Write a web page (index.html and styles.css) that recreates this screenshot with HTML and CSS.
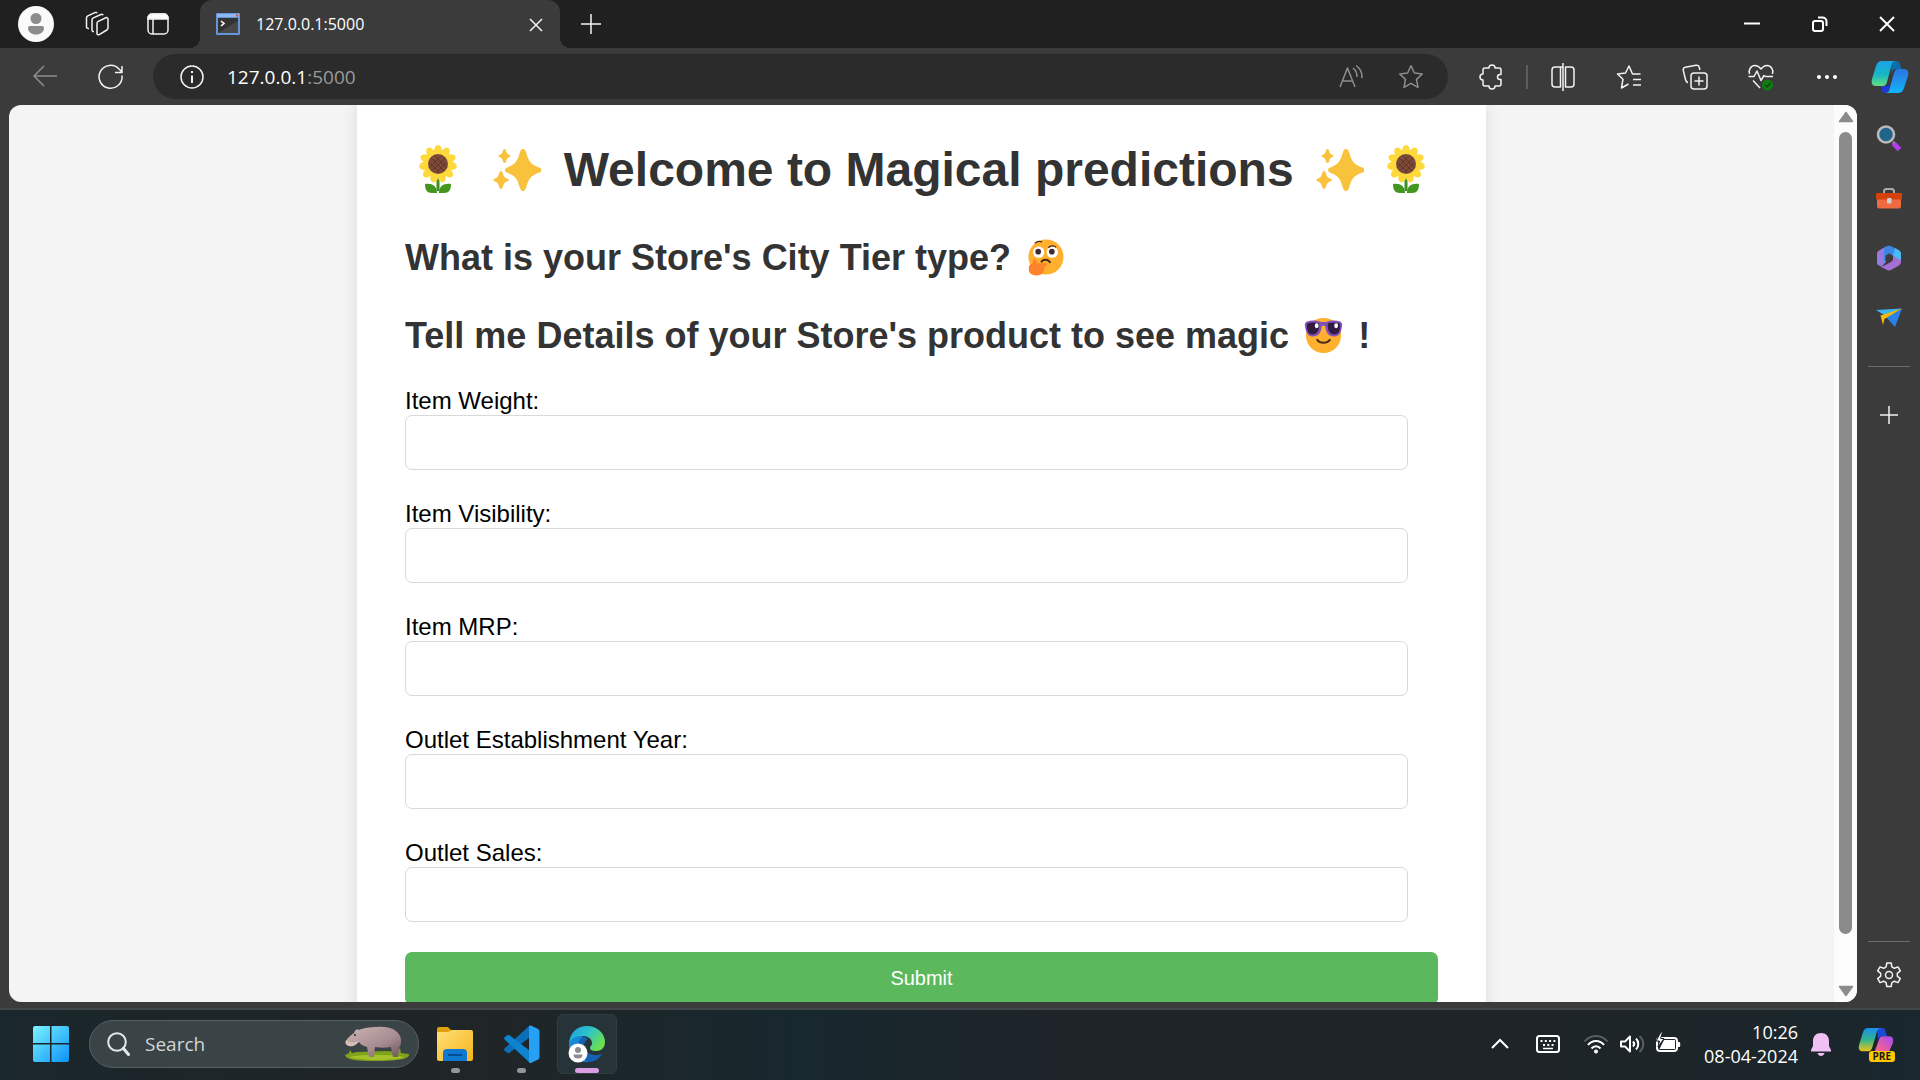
FILE: index.html
```html
<!DOCTYPE html>
<html lang="en">
<head>
<meta charset="utf-8">
<meta name="viewport" content="width=device-width, initial-scale=1">
<title>127.0.0.1:5000</title>
<link rel="stylesheet" href="styles.css">
</head>
<body>
<svg class="defs" width="0" height="0" aria-hidden="true">
  <defs>
    <linearGradient id="cp-a" x1="0" y1="0" x2="0" y2="1"><stop offset="0" stop-color="#1aa2e8"/><stop offset=".55" stop-color="#18b7c4"/><stop offset="1" stop-color="#63df82"/></linearGradient>
    <linearGradient id="cp-b" x1="0" y1="0" x2="0" y2="1"><stop offset="0" stop-color="#2c74e0"/><stop offset="1" stop-color="#12b4fa"/></linearGradient>
    <linearGradient id="pr-a" x1="0" y1="0" x2="0" y2="1"><stop offset="0" stop-color="#1d8cf0"/><stop offset=".5" stop-color="#2fb48c"/><stop offset="1" stop-color="#f2c418"/></linearGradient>
    <linearGradient id="pr-b" x1="1" y1="0" x2="0" y2="1"><stop offset="0" stop-color="#a04cf0"/><stop offset=".6" stop-color="#f0609c"/><stop offset="1" stop-color="#f58a5a"/></linearGradient>
    <linearGradient id="win" x1="0" y1="0" x2="1" y2="1"><stop offset="0" stop-color="#7bf3ff"/><stop offset="1" stop-color="#0a93f8"/></linearGradient>
    <linearGradient id="folder" x1="0" y1="0" x2="1" y2="1"><stop offset="0" stop-color="#ffdf7a"/><stop offset="1" stop-color="#f6b31a"/></linearGradient>
    <linearGradient id="edge-a" x1="0" y1="0" x2="1" y2=".5"><stop offset="0" stop-color="#1b9de2"/><stop offset=".55" stop-color="#2fc4c8"/><stop offset="1" stop-color="#6be052"/></linearGradient>
    <linearGradient id="hippo" x1="0" y1="0" x2="1" y2="1"><stop offset="0" stop-color="#cdb6b4"/><stop offset=".6" stop-color="#a78c91"/><stop offset="1" stop-color="#6d555e"/></linearGradient>
    <symbol id="sunflower" viewBox="0 0 48 48">
      <path d="M24 33v13" stroke="#3c911c" stroke-width="3"/>
      <path d="M11 39c7-1 12 2 12 9h-5c-5 0-7-3-7-9zM37 39c-7-1-12 2-12 9h5c5 0 7-3 7-9z" fill="#43961e"/>
      <g fill="#ffd83b">
        <ellipse cx="24" cy="6" rx="4" ry="6"/>
        <ellipse cx="24" cy="6" rx="4" ry="6" transform="rotate(33 24 19)"/>
        <ellipse cx="24" cy="6" rx="4" ry="6" transform="rotate(66 24 19)"/>
        <ellipse cx="24" cy="6" rx="4" ry="6" transform="rotate(98 24 19)"/>
        <ellipse cx="24" cy="6" rx="4" ry="6" transform="rotate(131 24 19)"/>
        <ellipse cx="24" cy="6" rx="4" ry="6" transform="rotate(164 24 19)"/>
        <ellipse cx="24" cy="6" rx="4" ry="6" transform="rotate(196 24 19)"/>
        <ellipse cx="24" cy="6" rx="4" ry="6" transform="rotate(229 24 19)"/>
        <ellipse cx="24" cy="6" rx="4" ry="6" transform="rotate(262 24 19)"/>
        <ellipse cx="24" cy="6" rx="4" ry="6" transform="rotate(294 24 19)"/>
        <ellipse cx="24" cy="6" rx="4" ry="6" transform="rotate(327 24 19)"/>
        <circle cx="24" cy="19" r="12"/>
      </g>
      <circle cx="24" cy="19" r="10" fill="#7b4a38"/>
      <path d="M17 13l13 13M20 10l13 13M15 17l11 11M31 13L18 26M28 10L15 23M33 17L22 28" stroke="#653627" stroke-width="1"/>
    </symbol>
    <symbol id="sparkles" viewBox="0 0 48 48">
      <g fill="#f9c23c">
        <path d="M30 4c2 0 2.700 2 3.500 4.500C36 17 38 19 45 22c2.500 1 4 1.500 4 3s-1.500 2.200-4 3c-7 3-9 5-11.500 13.500C32.700 44 32 46 30 46s-2.700-2-3.500-4.500C24 33 22 31 15.500 28.200 13 27 12 26.500 12 25s1-2 3.500-3C22 19 24 17 26.500 8.500 27.300 6 28 4 30 4z"/>
        <path d="M11.500 4c1 0 1.300 1 1.600 2 .8 2.500 1.200 3 3 3.700.8.300 1.400.6 1.400 1.300s-.6 1-1.400 1.300c-1.800.7-2.200 1.200-3 3.700-.3 1-.6 2-1.600 2s-1.300-1-1.600-2c-.8-2.500-1.200-3-3-3.700C6.100 12 5.500 11.700 5.500 11s.6-1 1.400-1.300c1.800-.7 2.200-1.200 3-3.700.3-1 .6-2 1.600-2z"/>
        <path d="M8 26c1.200 0 1.500 1.200 2 2.700 1 3 1.500 3.800 4 4.800 1 .4 1.700.7 1.700 1.500s-.7 1.100-1.700 1.500c-2.500 1-3 1.800-4 4.800C9.500 42.800 9.200 44 8 44s-1.500-1.200-2-2.700c-1-3-1.500-3.800-4-4.800C1 36.100.5 35.800.5 35S1 33.900 2 33.500c2.500-1 3-1.800 4-4.800C6.500 27.200 6.800 26 8 26z"/>
      </g>
    </symbol>
  </defs>
</svg>

<header class="tabbar">
  <button class="tb-btn" aria-label="Profile"><svg width="36" height="36" viewBox="0 0 36 36"><circle cx="18" cy="18" r="18" fill="#fafafa"/><circle cx="18" cy="12.500" r="5.500" fill="#8c8c8c"/><path d="M10 22c0-1.300.8-2 2-2h12c1.200 0 2 .7 2 2 0 4-3.500 6.500-8 6.500S10 26 10 22z" fill="#8c8c8c"/></svg></button>
  <button class="tb-btn" aria-label="Workspaces"><svg class="line" width="26" height="26" viewBox="0 0 26 26"><path d="M13 12.500c0-1 .5-1.700 1.300-2.100l7.500-3.600c1.200-.5 2.200.1 2.200 1.300v9c0 .8-.4 1.500-1.200 1.900l-7.600 4.600c-1.200.6-2.200 0-2.200-1.200z"/><path d="M10 20.500c-1 .3-2-.3-2-1.500V9c0-1 .5-1.700 1.300-2.100L17 3.500c.9-.4 1.900-.2 2.200.8"/><path d="M5 17.500c-1.200.2-2.500-.4-2.500-1.600V7c0-1 .5-1.700 1.300-2.100l7-3.300c1-.4 2-.2 2.300.6"/></svg></button>
  <button class="tb-btn" aria-label="Tab actions"><svg class="line" width="24" height="24" viewBox="0 0 24 24"><rect x="2" y="2" width="20" height="20" rx="4"/><path d="M2 7V6a4 4 0 0 1 4-4h12a4 4 0 0 1 4 4v1z" fill="#fff"/><path d="M7 7v15"/></svg></button>
  <div class="tab">
    <svg width="24" height="22" viewBox="0 0 24 22"><rect width="24" height="22" rx="1" fill="#6595d6"/><rect x="1" y="1" width="22" height="3" fill="#8db7ef"/><circle cx="21" cy="2.500" r="1.200" fill="#e8503a"/><rect x="2" y="5" width="20" height="15" fill="#333"/><path d="M2 20L22 8v12z" fill="#484848"/><path d="M5 8l3 2.500L5 13" fill="none" stroke="#fff" stroke-width="1.600"/></svg>
    <span class="tab-title">127.0.0.1:5000</span>
    <button class="tab-close" aria-label="Close tab"><svg class="line" width="24" height="24" viewBox="0 0 24 24"><path d="M6 7l12 12M18 7L6 19"/></svg></button>
  </div>
  <button class="tb-btn" aria-label="New tab"><svg class="line" width="24" height="24" viewBox="0 0 24 24"><path d="M12 2v20M2 12h20"/></svg></button>
  <div class="window-controls">
    <button aria-label="Minimize"><svg width="24" height="24" viewBox="0 0 24 24"><path d="M4 11.500h16" stroke="#fff" stroke-width="2"/></svg></button>
    <button aria-label="Restore"><svg class="bold" width="24" height="24" viewBox="0 0 24 24"><rect x="5" y="9" width="10" height="10" rx="2"/><path d="M10 5.500h4.500a4 4 0 0 1 4 4V14"/></svg></button>
    <button aria-label="Close"><svg class="bold" width="24" height="24" viewBox="0 0 24 24"><path d="M5 5l14 14M19 5L5 19"/></svg></button>
  </div>
</header>

<nav class="toolbar">
  <button class="nav-btn" aria-label="Back"><svg class="line dim" width="28" height="28" viewBox="0 0 28 28"><path d="M26 13H3M13 3L3 13l10 10"/></svg></button>
  <button class="nav-btn" aria-label="Refresh"><svg class="line" width="28" height="28" viewBox="0 0 28 28"><path d="M25 12.500A11.500 11.500 0 1 1 22 6l3 3M25 3v6.500h-7"/></svg></button>
  <div class="address">
    <svg class="line" width="24" height="24" viewBox="0 0 24 24"><circle cx="12" cy="12" r="11"/><path d="M12 10.500V18M12 6v2" stroke-width="2"/></svg>
    <span class="url">127.0.0.1<span class="port">:5000</span></span>
    <button aria-label="Read aloud"><svg class="line dim" width="26" height="26" viewBox="0 0 26 26"><path d="M2 23L9.500 4 17 23M5 17h9"/><path d="M15 4a11 11 0 0 1 4 9M18 1.500A14 14 0 0 1 24 14"/></svg></button>
    <button aria-label="Favorite"><svg class="line dim" width="26" height="26" viewBox="0 0 26 26"><path d="M13 1.800l3.400 7.200 7.900 1-5.800 5.400 1.500 7.900-7-3.900-7 3.900 1.500-7.900L1.700 10l7.900-1z"/></svg></button>
  </div>
  <button class="nav-btn" aria-label="Extensions"><svg class="line" width="26" height="28" viewBox="0 0 26 28"><path d="M7 5h4a3 3 0 1 1 6 0h4a2 2 0 0 1 2 2v4.500h-1a2.500 2.500 0 0 0 0 5h1V21a2 2 0 0 1-2 2h-4a3 3 0 1 1-6 0H7a2 2 0 0 1-2-2v-4a3 3 0 1 1 0-6V7a2 2 0 0 1 2-2z"/></svg></button>
  <span class="divider"></span>
  <button class="nav-btn" aria-label="Split screen"><svg class="line" width="26" height="28" viewBox="0 0 26 28"><path d="M13 0v28M13 4H5a3 3 0 0 0-3 3v14a3 3 0 0 0 3 3h5.500V4M15.500 4H21a3 3 0 0 1 3 3v14a3 3 0 0 1-3 3h-5.500z"/></svg></button>
  <button class="nav-btn" aria-label="Favorites"><svg class="line" width="26" height="26" viewBox="0 0 26 26"><path d="M24.500 10h-8L13 2 9.500 9 1.500 10l5.500 5.200L5.500 24l7-4M17 15.500h8M17 21h8"/></svg></button>
  <button class="nav-btn" aria-label="Collections"><svg class="line" width="26" height="26" viewBox="0 0 26 26"><rect x="9" y="9" width="16" height="16" rx="3"/><path d="M17 12.500v9M12.500 17h9M6 18.500C4.500 18.500 4 17 3.500 15.500L1.300 6.500C1 4.800 1.800 3.500 3.300 3.200L14 1.200c1.700-.3 3 .6 3.300 2.300l.5 2.500"/></svg></button>
  <button class="nav-btn" aria-label="Browser essentials"><svg class="line" width="28" height="28" viewBox="0 0 28 28"><path d="M2.500 11C1 7 4 2.500 8 2.500c3 0 4.500 1.500 6 3.500 1.500-2 3-3.500 6-3.500 4 0 7 4.500 5.500 8.500M1.500 13.500H7l3-5.500 4 9.500 3-5 1.500 1H26M6 17.500l7 7.500"/><circle cx="20.500" cy="22" r="5.500" fill="#0f7b10" stroke="none"/><path d="M18 22l2 2 3.500-4" stroke="#0a4d0a"/></svg></button>
  <button class="nav-btn" aria-label="Settings and more"><svg width="26" height="26" viewBox="0 0 26 26" fill="#fff"><circle cx="5" cy="13" r="2"/><circle cx="13" cy="13" r="2"/><circle cx="21" cy="13" r="2"/></svg></button>
  <button class="copilot" aria-label="Copilot"><svg width="38" height="36" viewBox="0 0 38 36"><path d="M20 2h5c2.500 0 3.500 1 4 3l1.500 5h-5c-3 0-4 1.500-5 4z" fill="#0c6fa8"/><path d="M17 34h-3c-2 0-2.600-1-3-3l-1-4H15c2 0 3-1.500 4-4z" fill="#2138d8"/><path d="M11 2h14c-3 0-4 1.500-4.500 4L16 23c-.8 2.500-2 4-4 4H5c-4 0-5-3-4-7L5 7c1-3.500 3-5 6-5z" fill="url(#cp-a)"/><path d="M27 34H14c3 0 4-1.500 4.500-4L23 14c.8-2.500 2-4 4-4h6c4 0 5 3 4 7l-4 12c-1 3.500-3 5-6 5z" fill="url(#cp-b)"/></svg></button>
</nav>

<div class="workspace">
  <div class="viewport">
    <div class="page">
      <main class="card">
        <h1><svg class="emoji-lg" role="img" aria-label="Sunflower"><use href="#sunflower"/></svg> <svg class="emoji-lg" role="img" aria-label="Sparkles"><use href="#sparkles"/></svg> Welcome to Magical predictions <svg class="emoji-lg" role="img" aria-label="Sparkles"><use href="#sparkles"/></svg><svg class="emoji-lg" role="img" aria-label="Sunflower"><use href="#sunflower"/></svg></h1>
        <h2>What is your Store's City Tier type? <svg class="emoji" viewBox="0 0 38 38" role="img" aria-label="Thinking face"><circle cx="19.500" cy="18.500" r="18" fill="#ffb02e"/><circle cx="12" cy="13.500" r="5.800" fill="#fff"/><circle cx="26" cy="13.500" r="5.800" fill="#fff"/><circle cx="11.500" cy="13" r="2.900" fill="#3f2a33"/><circle cx="25.500" cy="13" r="2.900" fill="#3f2a33"/><path d="M8 4.500c2-2 5-2.500 7.500-1.500M22 9c2-2.500 6-2.500 8-.5" fill="none" stroke="#4a2a1c" stroke-width="1.300"/><path d="M14.500 24c2-4 7.500-3.500 9.500.5" fill="none" stroke="#4a2a1c" stroke-width="2"/><path d="M7 21c2-.5 3 1 3.300 4l9.200 0c1.500.3 1.700 2.500 0 3l-2 .5c1 4-1.500 9-7.500 9-7 0-9-4-8-9 .7-4 4-2 4-5 0-1.500 0-2.300 1-2.500z" fill="#ff822d"/></svg></h2>
        <h2>Tell me Details of your Store's product to see magic <svg class="emoji" viewBox="0 0 38 38" role="img" aria-label="Smiling face with sunglasses"><circle cx="19" cy="19" r="18" fill="#ffb02e"/><path d="M2 4.500c4-1.500 10-1 13 0 2.500.8 5.500.8 8 0 3-1 9-1.500 13 0 2 1 2.500 3 2 5-1 7-3 10.500-8 10.500-6 0-8.500-4-9-9.500-.5-2-3.500-2-4 0C16.500 16 14 20 8 20 3 20 1 16.500 0 9.500-.5 7.500 0 5.500 2 4.500z" fill="#8250b8"/><path d="M3 6.500c4-1.500 8-1 11.500 0 .8 6-1.500 11.500-6.500 11.500-4.500 0-6-3.500-6-9 0-1 0-2 1-2.500zM35 6.500c-4-1.500-8-1-11.500 0C22.700 12.500 25 18 30 18c4.500 0 6-3.500 6-9 0-1 0-2-1-2.500z" fill="#321b41"/><ellipse cx="12" cy="9" rx="2" ry="2.500" fill="#fff"/><ellipse cx="32" cy="9" rx="2" ry="2.500" fill="#fff"/><path d="M12.500 23.500c3 4 10 4 13 0" fill="none" stroke="#4a2a1c" stroke-width="2" stroke-linecap="round"/></svg> !</h2>
        <form>
          <label for="weight">Item Weight:</label>
          <input id="weight" type="text">
          <label for="visibility">Item Visibility:</label>
          <input id="visibility" type="text">
          <label for="mrp">Item MRP:</label>
          <input id="mrp" type="text">
          <label for="year">Outlet Establishment Year:</label>
          <input id="year" type="text">
          <label for="sales">Outlet Sales:</label>
          <input id="sales" type="text">
          <button class="submit" type="button">Submit</button>
        </form>
      </main>
    </div>
    <div class="scrollbar">
      <svg width="16" height="12" viewBox="0 0 16 12"><path d="M8 1.500L14.500 10.500h-13z" fill="#8b8b8b" stroke="#8b8b8b" stroke-width="1.500" stroke-linejoin="round"/></svg>
      <span class="track"><span class="thumb"></span></span>
      <svg width="16" height="12" viewBox="0 0 16 12"><path d="M8 10.500L14.500 1.500h-13z" fill="#8b8b8b" stroke="#8b8b8b" stroke-width="1.500" stroke-linejoin="round"/></svg>
    </div>
  </div>
  <aside class="sidebar">
    <button aria-label="Search"><svg width="28" height="28" viewBox="0 0 28 28"><path d="M18 18l3 3" stroke="#999" stroke-width="3"/><path d="M18.500 19.500l6 6" stroke="#b43cf0" stroke-width="5"/><circle cx="11" cy="10.500" r="8" fill="#1f658c" stroke="#b9b9b9" stroke-width="2.600"/></svg></button>
    <button aria-label="Shopping tools"><svg width="28" height="24" viewBox="0 0 28 24"><path d="M9 8V5.500C9 4 9.800 3 11.300 3h5.400C18.200 3 19 4 19 5.500V8" fill="none" stroke="#aaa" stroke-width="2"/><path d="M2 12h24v8a2.500 2.500 0 0 1-2.500 2.500h-19A2.500 2.500 0 0 1 2 20z" fill="#ee6a40"/><rect x="1" y="7" width="26" height="6.500" rx="1" fill="#d4410d"/><rect x="12" y="12" width="4.500" height="5.500" rx="1.200" fill="#d0d0d0"/></svg></button>
    <button aria-label="Microsoft 365"><svg width="28" height="28" viewBox="0 0 28 28"><path d="M11 2.500L4 6.500C2.500 7.500 2 8.500 2 10v8.500c0 1.500.6 2.500 2 3l3 .5 4-4V8z" fill="#9a7ae0"/><path d="M11 2.500c1.500-1 4-1 5.500-.2l7 4c1.600 1 2.500 2.400 2.500 4V17l-8-5-4-2.500-3 2V17l-2 1C8.500 14 9 8 9 6c0-1.500.7-2.700 2-3.500z" fill="#3c86e6"/><path d="M18 12l8 5v-7c0-1.600-.8-3-2.500-4L20 4z" fill="#48bdf5"/><path d="M26 16v2c0 1.500-.8 2.800-2 3.500l-7.500 4.300c-1.500.8-3.500.8-5 0L4 21.800c2.500 1 5 .2 7-1l5-3c1.700-1 2-2 2-3.500V12z" fill="#a46fd2"/><path d="M14 9.500l4 2.500v4l-4 2.500L10.500 17v-5z" fill="#3b3b3b"/></svg></button>
    <button aria-label="Drop"><svg width="28" height="24" viewBox="0 0 28 24"><path d="M1 4l26-1.500L9 9z" fill="#42b6f0"/><path d="M27 2.500L20 21 11 11z" fill="#2a82e8"/><path d="M27 2.500L9.500 13 8 19 5.500 9.500z" fill="#f6b90c"/></svg></button>
    <span class="rule"></span>
    <button class="add" aria-label="Customize"><svg class="line" width="24" height="24" viewBox="0 0 24 24"><path d="M12 3v18M3 12h18"/></svg></button>
    <span class="rule push"></span>
    <button class="gear" aria-label="Settings"><svg class="line" width="28" height="28" viewBox="0 0 28 28"><circle cx="14" cy="14" r="3.500"/><path d="M11.800 2h4.400l.7 3.900 2.400 1.400 3.700-1.400 2.300 3.900-3 2.500v2.900l3 2.500-2.300 3.900-3.700-1.400-2.400 1.400-.7 3.900h-4.400l-.7-3.900-2.400-1.400L5 21.600l-2.300-3.900 3-2.500v-2.900l-3-2.500L5 5.900l3.700 1.400 2.400-1.400z"/></svg></button>
  </aside>
</div>

<footer class="taskbar">
  <button class="tile" aria-label="Start"><svg width="36" height="36" viewBox="0 0 36 36"><path d="M2 0h15v17H0V2a2 2 0 0 1 2-2zM18.500 0H34a2 2 0 0 1 2 2v15H18.500zM0 18.500h17V36H2a2 2 0 0 1-2-2zM18.500 18.500H36V34a2 2 0 0 1-2 2H18.500z" fill="url(#win)"/></svg></button>
  <div class="search">
    <svg width="26" height="26" viewBox="0 0 26 26" fill="none" stroke="#e6e9ea"><circle cx="11" cy="11" r="8.800" stroke-width="2"/><path d="M17.500 17.500l5 6" stroke-width="3" stroke-linecap="round"/></svg>
    <input type="text" placeholder="Search" aria-label="Search">
    <svg width="66" height="36" viewBox="0 0 66 36"><path d="M1 29l4-2 1-3 2 3 5-1 30-1 10 1 3-4 1 5 8 1c1 5-11 7-33 7C13 35 2 34 1 29z" fill="#7ea31a"/><path d="M5 31c15-3 40-3 55 0-8 4-45 4-55 0z" fill="#a5c22a"/><path d="M28 22l1 8h-4l-1-8zM52 18l1 12h-4l-2-10z" fill="#75606a"/><path d="M10 7c1-3 3-5 5-3 4-2 11-3 18-3 13-1 20 3 23 9 2 5 1 9-1 12l-1 9h-5l-2-10c-5 1-11 1-16 0l-1 10h-5l-2-10c-4-1-7-3-8-5-3 1-6 5-10 4-5-1-4-5-1-8 2-2 4-4 6-5z" fill="url(#hippo)"/><path d="M2 14c3 3 9 3 13 1-2 4-6 6-10 5-3-1-4-3-3-6z" fill="#d9beb8"/><circle cx="11" cy="9" r="1" fill="#33252c"/></svg>
  </div>
  <button class="tile running" aria-label="File Explorer"><svg width="36" height="34" viewBox="0 0 36 34"><path d="M0 2a2 2 0 0 1 2-2h9l3 3h18v8H0z" fill="#e0a008"/><path d="M0 5h11l4-2h19a2 2 0 0 1 2 2v27a2 2 0 0 1-2 2H2a2 2 0 0 1-2-2z" fill="url(#folder)"/><path d="M6 34V26a4 4 0 0 1 4-4h16a4 4 0 0 1 4 4v8z" fill="#0f78d0"/><path d="M11 28h14" stroke="#0a4c94" stroke-width="2"/></svg></button>
  <button class="tile running" aria-label="Visual Studio Code"><svg width="38" height="38" viewBox="0 0 38 38"><path d="M27 1L3 23c-1 1-1.500 2 0 3l2 1.600c1 .8 2 .6 3-.2L28 12z" fill="#0b6fb8"/><path d="M27 37L3 15c-1-1-1.500-2 0-3l2-1.600c1-.8 2-.6 3 .2L28 26z" fill="#0e84d0"/><path d="M27 1c.8-.7 1.500-.8 2.500-.3l6 3c1.500.8 2 1.500 2 3v25c0 1.400-.5 2.200-2 3l-6 3c-1 .4-1.700.3-2.500-.3V1z" fill="#26a0f4"/></svg></button>
  <button class="tile running active" aria-label="Microsoft Edge"><svg width="38" height="38" viewBox="0 0 38 38"><path d="M1 20c1 9 9 17 19 17 6 0 11-3 14-8-8 3-17 0-18-8 0-4 2-6 4-7C10 8 1 12 1 20z" fill="#1562b4"/><path d="M1 20C1 8 9 1 19 1s18 7 18 16c0 6-4 9-9 9-4 0-6-1-6-3s2-2 2-5c0-4-4-7-9-7-8 0-13 4-14 9z" fill="url(#edge-a)"/><path d="M1 20c1-7 8-9 14-9-3 3-5 6-5 11 0 6 4 12 10 15C9 37 1 30 1 20z" fill="#1887d6"/><circle cx="10" cy="28" r="9.500" fill="#fff"/><circle cx="10" cy="25" r="3" fill="#8b8b8b"/><path d="M5.500 29.500h9c0 3-2 4-4.500 4s-4.500-1-4.500-4z" fill="#8b8b8b"/></svg></button>
  <div class="tray">
    <button class="tray-btn" aria-label="Show hidden icons"><svg class="bold" width="24" height="24" viewBox="0 0 24 24"><path d="M4 16l8-8 8 8"/></svg></button>
    <button class="tray-btn" aria-label="Touch keyboard"><svg class="bold" width="26" height="24" viewBox="0 0 26 24"><rect x="2" y="4" width="22" height="16" rx="2.500"/><path d="M5.500 9h15M8 13h11" stroke-dasharray="2 2.300"/><path d="M8 16.500h10" stroke-width="1.500"/></svg></button>
    <div class="status">
      <svg width="26" height="24" viewBox="0 0 26 24" fill="none" stroke="#fff" stroke-width="2"><path d="M1.500 9.500c6-7.500 17-7.500 23 0" stroke="#586063"/><path d="M5 13c4-5.500 12-5.500 16 0M8.500 16.500c2.500-3 6.500-3 9 0"/><circle cx="13" cy="19.500" r="1.600" fill="#fff" stroke-width="1"/></svg>
      <svg width="26" height="24" viewBox="0 0 26 24" fill="none" stroke="#fff" stroke-width="2" stroke-linejoin="round"><path d="M2 9.500h4l5-5v15l-5-5H2z"/><path d="M14 9.500c1.500 1.500 1.500 3.500 0 5M17 6.500c3 3 3 8 0 11"/><path d="M20.500 4c5 4.500 5 11.500 0 16" stroke="#586063"/></svg>
      <svg width="26" height="24" viewBox="0 0 26 24"><rect x="2" y="6" width="20" height="13" rx="3" fill="none" stroke="#fff" stroke-width="2"/><path d="M9 8h11v9H4.500zM23 10h1.500c1 0 1 5 0 5H23z" fill="#fff"/><path d="M6 0L1 9h3.500L3 15l6-8.500H5.500L7.500 0z" fill="#fff" stroke="#1f2528" stroke-width="1"/></svg>
    </div>
    <div class="clock"><span>10:26</span><span>08-04-2024</span></div>
    <svg class="bell" width="24" height="26" viewBox="0 0 24 26"><path d="M12 2c5 0 8 3.500 8 8v5l2 4v1.500H2V19l2-4v-5c0-4.500 3-8 8-8zM8.500 22h7c-.5 2-2 3-3.500 3s-3-1-3.500-3z" fill="#f0bff3"/></svg>
    <button class="preview" aria-label="Copilot preview"><svg width="36" height="30" viewBox="0 0 38 32"><path d="M20 2h5c2.500 0 3.500 1 4 3l2 6h-5c-3 0-4 1.500-5 4z" fill="#1c49d8"/><path d="M11 2h14c-3 0-4 1.500-5 4l-5 17c-.8 2.500-2 4-4 4H5c-4 0-5-3-4-7L5 7c1-3.500 3-5 6-5z" fill="url(#pr-a)"/><path d="M27 31H12c3 0 5-2 6-5l4-11c.8-2.500 2-4 4-4h7c4 0 5 3 4 7l-4 9c-1 3-3 4-6 4z" fill="url(#pr-b)"/></svg><span class="badge">PRE</span></button>
  </div>
</footer>
</body>
</html>
```

FILE: styles.css
```css
* { box-sizing: border-box; }

body {
  margin: 0;
  height: 100vh;
  display: flex;
  flex-direction: column;
  overflow: hidden;
  background: #3b3b3b;
  font-family: "Open Sans", "Noto Sans", sans-serif;
  color: #fff;
}

button {
  padding: 0;
  border: 0;
  background: none;
  color: inherit;
  font: inherit;
  display: flex;
  align-items: center;
  justify-content: center;
}

svg { display: block; flex: none; }
.defs { position: absolute; }

.line { fill: none; stroke: #f2f2f2; stroke-width: 1.5; stroke-linejoin: round; }
.bold { fill: none; stroke: #fff; stroke-width: 2; }
.dim { stroke: #8e8e8e; }

/* Tab strip */
.tabbar {
  flex: none;
  height: 48px;
  display: flex;
  background: #202020;
  padding-left: 5px;
}
.tb-btn { width: 61px; }
.tab {
  position: relative;
  width: 360px;
  margin-left: 12px;
  padding: 0 12px 0 16px;
  display: flex;
  align-items: center;
  gap: 16px;
  background: #3b3b3b;
  border-radius: 12px 12px 0 0;
  font-size: 16px;
}
.tab::before,
.tab::after {
  content: "";
  position: absolute;
  bottom: 0;
  width: 10px;
  height: 10px;
}
.tab::before { left: -10px; background: radial-gradient(circle at 0 0, transparent 10px, #3b3b3b 10px); }
.tab::after { right: -10px; background: radial-gradient(circle at 100% 0, transparent 10px, #3b3b3b 10px); }
.tab-title { flex: 1; }
.window-controls { display: flex; margin-left: auto; }
.window-controls button { width: 68px; }
.window-controls button:last-child { width: 66px; }

/* Address row */
.toolbar {
  flex: none;
  height: 57px;
  padding: 6px 0 6px 12px;
  display: flex;
  align-items: center;
}
.nav-btn { width: 66px; height: 45px; }
.address {
  flex: 1;
  height: 45px;
  margin: 0 10px 0 9px;
  padding: 0 7px 0 27px;
  display: flex;
  align-items: center;
  border-radius: 23px;
  background: #2b2b2b;
}
.address button { width: 60px; height: 45px; }
.url { flex: 1; margin-left: 23px; font-size: 19px; }
.port { color: #9a9a9a; }
.divider { width: 2px; height: 24px; margin: 0 2px; background: #5c5c5c; }
.copilot { width: 60px; }

/* Page and side rail */
.workspace {
  flex: 1;
  min-height: 0;
  display: flex;
  padding: 0 0 6px 9px;
}
.viewport {
  flex: 1;
  min-width: 0;
  display: flex;
  overflow: hidden;
  border-radius: 12px;
  background: #f4f4f4;
}
.page {
  flex: 1;
  min-width: 0;
  overflow: hidden;
  font-family: "Liberation Sans", Arial, sans-serif;
}
.card {
  max-width: 1129px;
  margin: 0 auto;
  padding: 33px 48px;
  background: #fff;
  box-shadow: 0 0 15px rgba(0, 0, 0, 0.1);
  color: #000;
  font-size: 24px;
}
h1, h2 { margin: 0; color: #333; white-space: nowrap; }
h1 { font-size: 48px; line-height: 64px; margin-bottom: 32px; text-align: center; }
h2 { font-size: 36px; line-height: 48px; }
h2 + h2 { margin: 30px 0 27px; }
.emoji-lg,
.emoji { display: inline-block; overflow: visible; }
.emoji-lg { width: 48px; height: 48px; margin: 0 9px; vertical-align: -7px; }
.emoji { width: 37px; height: 37px; margin: 0 6px; vertical-align: -6px; }

label { display: block; line-height: 28px; }
form input {
  display: block;
  width: calc(100% - 30px);
  height: 55px;
  margin: 0 0 30px;
  padding: 0 15px;
  border: 1px solid #d9d9d9;
  border-radius: 7px;
  background: #fff;
  font: inherit;
}
.submit {
  width: 100%;
  height: 53px;
  border-radius: 7px;
  background: #5cb85c;
  color: #fff;
  font-size: 20px;
}

.scrollbar {
  width: 23px;
  padding: 6px 0 5px;
  display: flex;
  flex-direction: column;
  align-items: center;
  gap: 9px;
  background: #fcfcfc;
}
.track { flex: 1; }
.thumb {
  display: block;
  width: 13px;
  height: 95%;
  border-radius: 7px;
  background: #8b8b8b;
}

.sidebar {
  width: 63px;
  padding-top: 3px;
  display: flex;
  flex-direction: column;
  align-items: center;
}
.sidebar button { width: 63px; height: 60px; }
.sidebar .gear { height: 54px; }
.sidebar .rule { width: 42px; height: 1px; margin: 18px 0; background: #6c6c6c; }
.sidebar .rule.push { margin: auto 0 6px; }

/* Taskbar */
.taskbar {
  flex: none;
  height: 72px;
  padding: 0 14px 2px 21px;
  display: flex;
  align-items: center;
  border-top: 2px solid #42484a;
  background: linear-gradient(90deg, #1a272c, #1f2527 18%, #202527 25%, #17282e 42%, #1f2429 56%, #1e2528 85%, #19272e);
}
.tile {
  position: relative;
  width: 60px;
  height: 60px;
  margin-right: 6px;
  border: 1px solid transparent;
  border-radius: 6px;
}
.running::after {
  content: "";
  position: absolute;
  bottom: 0;
  width: 9px;
  height: 5px;
  border-radius: 3px;
  background: #92989a;
}
.active { background: #26343a; border-color: #303d42; }
.active::after { width: 24px; background: #dc9de2; }
.search {
  width: 330px;
  height: 48px;
  margin: 0 6px 0 2px;
  padding: 0 8px 0 16px;
  display: flex;
  align-items: center;
  border: 1px solid #566064;
  border-radius: 24px;
  background: #3a4346;
}
.search input {
  flex: 1;
  min-width: 0;
  margin-left: 13px;
  padding: 0;
  border: 0;
  background: none;
  color: #fff;
  font: inherit;
  font-size: 19px;
}
.search input::placeholder { color: #d2d6d7; opacity: 1; }

.tray { display: flex; align-items: center; margin-left: auto; }
.tray-btn { width: 48px; height: 48px; }
.status { display: flex; gap: 10px; margin-left: 11px; }
.clock {
  width: 117px;
  display: flex;
  flex-direction: column;
  align-items: flex-end;
  font-size: 18px;
  line-height: 24px;
}
.bell { margin: 0 6px 0 11px; }
.preview { position: relative; width: 60px; height: 48px; margin-left: 7px; }
.preview svg { margin-bottom: 6px; }
.badge {
  position: absolute;
  right: 11px;
  bottom: 6px;
  padding: 0 4px;
  border-radius: 3px;
  background: #ffc800;
  color: #1a1a1a;
  font-size: 10px;
  font-weight: 700;
  line-height: 11px;
}
```
